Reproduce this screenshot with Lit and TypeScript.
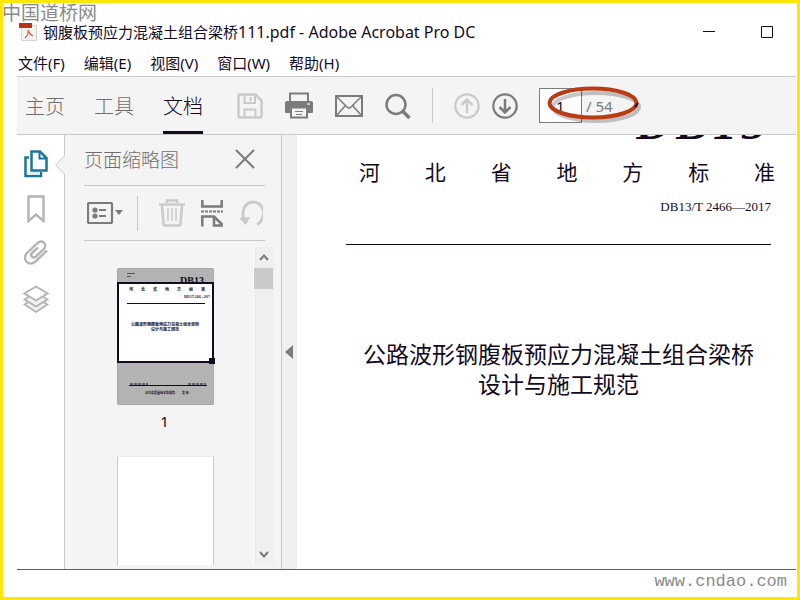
import { LitElement, html, css, svg } from "lit";
import { customElement, property, state } from "lit/decorators.js";

const MENUS = ["文件(F)", "编辑(E)", "视图(V)", "窗口(W)", "帮助(H)"];
const TABS = ["主页", "工具", "文档"];

/** Line icons shared by the toolbar, the rail and the thumbnails panel. */
const ICONS: Record<string, { w: number; h: number; body: unknown }> = {
  pdf: {
    w: 20, h: 18,
    body: svg`<path d="M3.5 2.5H18.5V17.5H3.5Z" fill="#f3f3f3" stroke="#d2d2d2"/>
      <rect x="1" width="13" height="5" fill="#b93512"/>
      <path d="M7 15C10 12 11 10 10 7C11 11 13 12 15 13" fill="none" stroke="#cf6a45" stroke-width="1.300"/>`,
  },
  save: {
    w: 26, h: 26,
    body: svg`<path d="M3 1.500H18.500L24.500 7.500V23Q24.500 24.500 23 24.500H3Q1.500 24.500 1.500 23V3Q1.500 1.500 3 1.500Z" fill="none" stroke="#cacaca" stroke-width="2.500"/>
      <path d="M7.500 2V10H18V2M7.500 24V16.500H18.500V24" fill="none" stroke="#cacaca" stroke-width="2"/>
      <path d="M13.500 4V8" stroke="#cacaca" stroke-width="2"/>`,
  },
  print: {
    w: 28, h: 27,
    body: svg`<path d="M5 10V1.500H23V10" fill="none" stroke="#7b7b7b" stroke-width="2"/>
      <path d="M2 9H26Q28 9 28 11V20Q28 21 27 21H1Q0 21 0 20V11Q0 9 2 9Z" fill="#7b7b7b"/>
      <path d="M6 15.500H22V25.500H6Z" fill="#f4f4f4" stroke="#7b7b7b" stroke-width="2"/>
      <path d="M10 19.500H18M11 22.500H17" stroke="#7b7b7b"/>
      <rect x="22" y="11" width="3" height="2" fill="#c8c8c8"/>`,
  },
  mail: {
    w: 28, h: 22,
    body: svg`<path d="M1 1H27V21H1Z" fill="none" stroke="#7b7b7b" stroke-width="2"/>
      <path d="M2 2L12 12Q14 14 16 12L26 2M2 20L10 11M26 20L18 11" fill="none" stroke="#7b7b7b" stroke-width="1.500"/>`,
  },
  search: {
    w: 26, h: 26,
    body: svg`<circle cx="11" cy="11.500" r="9.500" fill="none" stroke="#7b7b7b" stroke-width="2.500"/>
      <path d="M18 18.500L24.500 25" stroke="#7b7b7b" stroke-width="3.500"/>`,
  },
  up: {
    w: 26, h: 26,
    body: svg`<circle cx="13" cy="13" r="11.700" fill="none" stroke="#cacaca" stroke-width="2.200"/>
      <path d="M13 20V7M7.500 12L13 6.500L18.500 12" fill="none" stroke="#cacaca" stroke-width="2.500"/>`,
  },
  down: {
    w: 26, h: 26,
    body: svg`<circle cx="13" cy="13" r="11.700" fill="none" stroke="#7b7b7b" stroke-width="2.200"/>
      <path d="M13 6V19M7.500 14L13 19.500L18.500 14" fill="none" stroke="#7b7b7b" stroke-width="2.500"/>`,
  },
  pages: {
    w: 24, h: 28,
    body: svg`<path d="M5 7.500H1.500V26H17V22" fill="none" stroke="#1f7597" stroke-width="2.500"/>
      <path d="M7 21H16V25H3V23H7Z" fill="#d9edf6"/>
      <path d="M7.500 1.500H16L22.500 8V20.500H7.500Z" fill="#f6fbfd" stroke="#1f7597" stroke-width="2.500"/>
      <path d="M15.500 2V8.500H22" fill="none" stroke="#1f7597" stroke-width="2"/>`,
  },
  bookmark: {
    w: 18, h: 28,
    body: svg`<path d="M1.500 1.500H16.500V26L9 19.500L1.500 26Z" fill="none" stroke="#b3b3b3" stroke-width="2.400"/>`,
  },
  clip: {
    w: 26, h: 28,
    body: svg`<path d="M24 10.500L12.500 21.500C5.500 27.500 -1.500 19 4 13L14 3.500C19.500 -2 25 5 20.500 9.500L13 16.500C9.500 19.500 6.500 15 9.500 12.500L15 7.500" fill="none" stroke="#b3b3b3" stroke-width="2.400"/>`,
  },
  layers: {
    w: 26, h: 28,
    body: svg`<g fill="#f1f1f1" stroke="#b3b3b3" stroke-width="1.800"><path d="M7 16L1.500 19.500L13 27L24.500 19.500L19 16"/>
      <path d="M7 11L1.500 14.500L13 21.500L24.500 14.500L19 11"/>
      <path d="M13 1.500L24.500 8.500L13 15.500L1.500 8.500Z" fill="#fff"/></g>`,
  },
  close: {
    w: 20, h: 20,
    body: svg`<path d="M1 1L19 19M19 1L1 19" stroke="#7b7b7b" stroke-width="2"/>`,
  },
  options: {
    w: 36, h: 22,
    body: svg`<rect x="1" y="1" width="24" height="20" rx="1" fill="none" stroke="#7b7b7b" stroke-width="2.200"/>
      <circle cx="8" cy="8" r="2.600" fill="#7b7b7b"/><circle cx="8" cy="14" r="2.600" fill="#7b7b7b"/>
      <path d="M12 8H19M12 14H19" stroke="#7b7b7b" stroke-width="2"/>
      <path d="M28 8H36L32 13Z" fill="#7b7b7b"/>`,
  },
  trash: {
    w: 26, h: 28,
    body: svg`<g fill="none" stroke="#cacaca"><path d="M0 5.500H26" stroke-width="2.500"/>
      <path d="M8 4V1.500H18V4M3 6L4.500 25Q4.500 26.500 6 26.500H20Q21.500 26.500 21.500 25L23 6" stroke-width="2.500"/>
      <path d="M9 9V22M13 9V22M17 9V22" stroke-width="1.500"/></g>`,
  },
  split: {
    w: 22, h: 28,
    body: svg`<g fill="none" stroke="#7b7b7b" stroke-width="2.500"><path d="M1.300 1V7.500H20.700V1"/>
      <path d="M1.300 27.500V17.500H13L20.700 25V26.500H13V18"/></g>
      <path d="M0 12.500H22" stroke="#7b7b7b" stroke-width="2" stroke-dasharray="3 1"/>`,
  },
  rotate: {
    w: 24, h: 26,
    body: svg`<path d="M5 20C2 11 6 2 14 2C22 2 26 10 24 16C23 20 21 23 18 24.500" fill="none" stroke="#cacaca" stroke-width="2.800"/>
      <path d="M0 18L11 17L7 25Z" fill="#cacaca"/>`,
  },
  scrollUp: { w: 10, h: 8, body: svg`<path d="M1 6L5 1.500L9 6" fill="none" stroke="#7b7b7b" stroke-width="2"/>` },
  scrollDown: { w: 10, h: 8, body: svg`<path d="M1 1L5 5.500L9 1" fill="none" stroke="#7b7b7b" stroke-width="2"/>` },
  collapse: { w: 8, h: 14, body: svg`<path d="M8 0V14L0 7Z" fill="#7b7b7b"/>` },
  minimize: { w: 14, h: 14, body: svg`<path d="M1 6.500H13" stroke="#140a1e"/>` },
  maximize: { w: 12, h: 12, body: svg`<path d="M.5 .5H11.500V11.500H.5Z" fill="none" stroke="#140a1e"/>` },
};

const icon = (name: string) => {
  const i = ICONS[name];
  return html`<svg width=${i.w} height=${i.h} viewBox="0 0 ${i.w} ${i.h}" aria-hidden="true">${i.body}</svg>`;
};

const base = css`
  * { box-sizing: border-box; }
  svg { display: block; flex: none; }
  button {
    display: flex; align-items: center; justify-content: center; flex: none;
    margin: 0; padding: 0; border: 0; background: none; color: inherit; font: inherit;
  }
`;

@customElement("app-toolbar")
class AppToolbar extends LitElement {
  @state() private active = 2;
  @property({ type: Number }) pages = 54;

  static styles = [base, css`
    :host { display: flex; height: 59px; border-top: 1px solid #c8c8c8; border-bottom: 1px solid #c8c8c8; background: #f4f4f4; padding-left: 8px; }
    .tabs { display: flex; gap: 29px; }
    .tab { font-size: 20px; font-weight: 300; color: #6e6e6e; border-bottom: 3px solid transparent; padding-top: 3px; }
    .tab.on { color: #140a1e; border-color: #140a1e; }
    .tools { display: flex; align-items: center; gap: 21px; margin-left: 34px; }
    .file { display: flex; align-items: center; gap: 22px; }
    .rule { width: 1px; height: 35px; background: #c8c8c8; }
    .nav { display: flex; gap: 12px; }
    .pager { position: relative; display: flex; align-items: center; gap: 4px; font-size: 15px; color: #7b7b7b; }
    .pager input { width: 43px; height: 35px; border: 1px solid #7b7b7b; background: #fff; padding: 0 16px; font: inherit; color: #140a1e; }
    .ring { position: absolute; left: 5px; top: -4px; pointer-events: none; }
  `];

  render() {
    return html`
      <div class="tabs">
        ${TABS.map((t, i) => html`<button class="tab ${i === this.active ? "on" : ""}" @click=${() => (this.active = i)}>${t}</button>`)}
      </div>
      <div class="tools">
        <div class="file">
          <button aria-label="保存">${icon("save")}</button>
          <button aria-label="打印">${icon("print")}</button>
          <button aria-label="邮件">${icon("mail")}</button>
          <button aria-label="查找">${icon("search")}</button>
        </div>
        <div class="rule"></div>
        <div class="nav">
          <button aria-label="上一页">${icon("up")}</button>
          <button aria-label="下一页">${icon("down")}</button>
        </div>
        <div class="pager">
          <input aria-label="页码" value="1" /><span>/ ${this.pages}</span>
          <svg class="ring" width="100" height="42" viewBox="0 0 100 42" aria-hidden="true">
            <ellipse cx="52" cy="23" rx="43" ry="14" fill="none" stroke="#000" stroke-opacity=".22" stroke-width="4"/>
            <ellipse cx="49" cy="19" rx="43.500" ry="14.500" fill="none" stroke="#bb3c14" stroke-width="4"/>
            <path d="M91 23L94 19" stroke="#140a1e" stroke-width="1.500"/>
          </svg>
        </div>
      </div>`;
  }
}

@customElement("page-thumbnail")
class PageThumbnail extends LitElement {
  static styles = [base, css`
    :host { display: block; }
    text { fill: #140a1e; font-weight: 700; }
    .serif { font-family: "Liberation Serif", serif; }
  `];

  render() {
    return html`<svg width="98" height="138" viewBox="0 0 98 138" role="img" aria-label="第 1 页">
      <rect x=".5" y=".5" width="96" height="136" rx="1" fill="#b3b3b3" stroke="#a6a6a6"/>
      <path d="M10 5.500H18M10 8.500H14" stroke="#555"/>
      <text class="serif" x="63" y="16" font-size="10">DB13</text>
      <rect x="1" y="15" width="95" height="79" fill="#fff" stroke="#140a1e" stroke-width="2"/>
      ${[..."河北省地方标准"].map((c, i) => svg`<text x=${12 + i * 12} y="23" font-size="4">${c}</text>`)}
      <text class="serif" x="67" y="30" font-size="3">DB13/T 2466—2017</text>
      <path d="M10 35.500H88" stroke="#140a1e"/>
      <text x="48" y="58" font-size="4" text-anchor="middle">公路波形钢腹板预应力混凝土组合梁桥</text>
      <text x="48" y="63" font-size="4" text-anchor="middle">设计与施工规范</text>
      <rect x="92" y="90" width="6" height="6" fill="#140a1e"/>
      <path d="M12 117.500H90" stroke="#140a1e"/>
      <path d="M13 116H31M71 116H89" stroke="#140a1e" stroke-dasharray="3 1"/>
      <text x="28" y="126" font-size="3">河北省质量技术监督局</text>
      <text x="65" y="126" font-size="3">发 布</text>
    </svg>`;
  }
}

@customElement("thumbnails-panel")
class ThumbnailsPanel extends LitElement {
  static styles = [base, css`
    :host { display: flex; flex-direction: column; width: 218px; flex: none; background: #f4f4f4; border-left: 1px solid #c8c8c8; border-right: 1px solid #c8c8c8; }
    header, .bar { display: flex; align-items: center; margin: 0 16px 0 19px; border-bottom: 1px solid #c8c8c8; overflow: hidden; }
    header { height: 51px; justify-content: space-between; padding-right: 10px; }
    h2 { margin: 0; font-size: 19px; font-weight: 300; line-height: 48px; color: #6e6e6e; }
    header button { align-self: flex-start; padding-top: 14px; }
    .bar { height: 55px; padding-left: 3px; }
    .bar .rule { width: 1px; height: 35px; margin: 0 21px 0 14px; background: #c8c8c8; }
    .bar .set { display: flex; align-items: center; gap: 16px; }
    .list { display: flex; flex: 1; min-height: 0; margin: 6px 7px 4px; }
    .sheets { flex: 1; min-width: 0; overflow: hidden; display: flex; flex-direction: column; align-items: center; padding: 21px 0 0 7px; border-right: 1px solid #fff; }
    .label { font-size: 15px; line-height: 28px; color: #140a1e; padding: 1px 3px 21px 0; }
    .blank { flex: none; width: 97px; height: 137px; margin-right: 1px; background: #fff; border: 1px solid #c8c8c8; border-top-color: #ececec; }
    .scroll { display: flex; flex-direction: column; justify-content: space-between; width: 20px; background: #efefef; }
    .scroll button { width: 100%; height: 21px; }
    .grip { height: 21px; background: #cacaca; margin-right: 1px; }
  `];

  render() {
    return html`
      <header><h2>页面缩略图</h2><button aria-label="关闭">${icon("close")}</button></header>
      <div class="bar">
        <button aria-label="选项">${icon("options")}</button>
        <div class="rule"></div>
        <div class="set">
          <button aria-label="删除">${icon("trash")}</button>
          <button aria-label="拆分">${icon("split")}</button>
          <button aria-label="旋转">${icon("rotate")}</button>
        </div>
      </div>
      <div class="list">
        <div class="sheets">
          <page-thumbnail></page-thumbnail>
          <div class="label">1</div>
          <div class="blank"></div>
        </div>
        <div class="scroll">
          <div><button aria-label="向上滚动">${icon("scrollUp")}</button><div class="grip"></div></div>
          <button aria-label="向下滚动">${icon("scrollDown")}</button>
        </div>
      </div>`;
  }
}

@customElement("document-view")
class DocumentView extends LitElement {
  static styles = [base, css`
    :host { display: block; flex: 1; min-width: 0; overflow: hidden; background: #fff; color: #140a1e; padding: 0 25px 0 49px; }
    .mark { display: flex; justify-content: flex-end; align-items: flex-end; gap: 5px; height: 4px; overflow: hidden; padding-right: 5px; font: italic 700 48px/32px "Liberation Serif", serif; }
    .issuer { display: flex; justify-content: space-between; margin: 16px -4px 0 13px; font-size: 21px; line-height: 34px; }
    .code { text-align: right; font: 13px/20px "Liberation Serif", serif; margin-top: 8px; padding-bottom: 27px; border-bottom: 1px solid #140a1e; }
    h1 { margin: 94px 0 0; font-size: 23px; font-weight: 400; line-height: 30px; text-align: center; white-space: nowrap; }
  `];

  render() {
    return html`
      <div class="mark">${[..."DB13"].map((c) => html`<span>${c}</span>`)}</div>
      <div class="issuer">${[..."河北省地方标准"].map((c) => html`<span>${c}</span>`)}</div>
      <div class="code">DB13/T 2466—2017</div>
      <h1>公路波形钢腹板预应力混凝土组合梁桥<br />设计与施工规范</h1>`;
  }
}

@customElement("app-root")
class AppRoot extends LitElement {
  static styles = [base, css`
    :host {
      position: relative; display: flex; flex-direction: column; box-sizing: border-box; height: 100vh;
      border: 3px solid #fde70a; padding: 0 1px 27px 14px; background: #fff; color: #140a1e;
      font-family: "Noto Sans", "Noto Sans CJK SC", sans-serif;
    }
    .title { display: flex; align-items: center; height: 46px; padding: 12px 23px 0 1px; }
    .title h1 { flex: 1; margin: 0 0 0 5px; font-size: 15px; font-weight: 400; line-height: 20px; white-space: nowrap; }
    .title .latin { font-size: 16px; }
    .window { display: flex; align-items: center; gap: 45px; }
    .menu { display: flex; gap: 19px; height: 27px; padding-left: 1px; font-size: 15px; }
    .main { display: flex; flex: 1; min-height: 0; border-bottom: 1px solid #1f7590; }
    .rail { position: relative; width: 47px; flex: none; display: flex; flex-direction: column; align-items: center; gap: 17px; padding: 15px 9px 0 0; }
    .notch { position: absolute; right: -1px; top: 20px; }
    .strip { display: flex; align-items: center; width: 15px; flex: none; background: #efefef; padding-left: 3px; }
    .stamp, .site { position: absolute; color: #8a8a8a; white-space: nowrap; }
    .stamp { left: -1px; top: -3px; font-size: 19px; line-height: 26px; }
    .site { right: 10px; bottom: 3px; font: 17px/24px "Liberation Mono", monospace; }
  `];

  render() {
    return html`
      <div class="title">
        ${icon("pdf")}
        <h1>钢腹板预应力混凝土组合梁桥<span class="latin">111.pdf - Adobe Acrobat Pro DC</span></h1>
        <div class="window">
          <button aria-label="最小化">${icon("minimize")}</button>
          <button aria-label="最大化">${icon("maximize")}</button>
        </div>
      </div>
      <nav class="menu">${MENUS.map((m) => html`<button>${m}</button>`)}</nav>
      <app-toolbar></app-toolbar>
      <div class="main">
        <div class="rail">
          <button aria-label="页面">${icon("pages")}</button>
          <button aria-label="书签">${icon("bookmark")}</button>
          <button aria-label="附件">${icon("clip")}</button>
          <button aria-label="图层">${icon("layers")}</button>
          <svg class="notch" width="10" height="20" viewBox="0 0 10 20" aria-hidden="true">
            <path d="M10 .5L.5 10L10 19.500" fill="#f4f4f4" stroke="#c8c8c8"/>
          </svg>
        </div>
        <thumbnails-panel></thumbnails-panel>
        <div class="strip"><button aria-label="折叠面板">${icon("collapse")}</button></div>
        <document-view></document-view>
      </div>
      <div class="stamp">中国道桥网</div>
      <div class="site">www.cndao.com</div>`;
  }
}
